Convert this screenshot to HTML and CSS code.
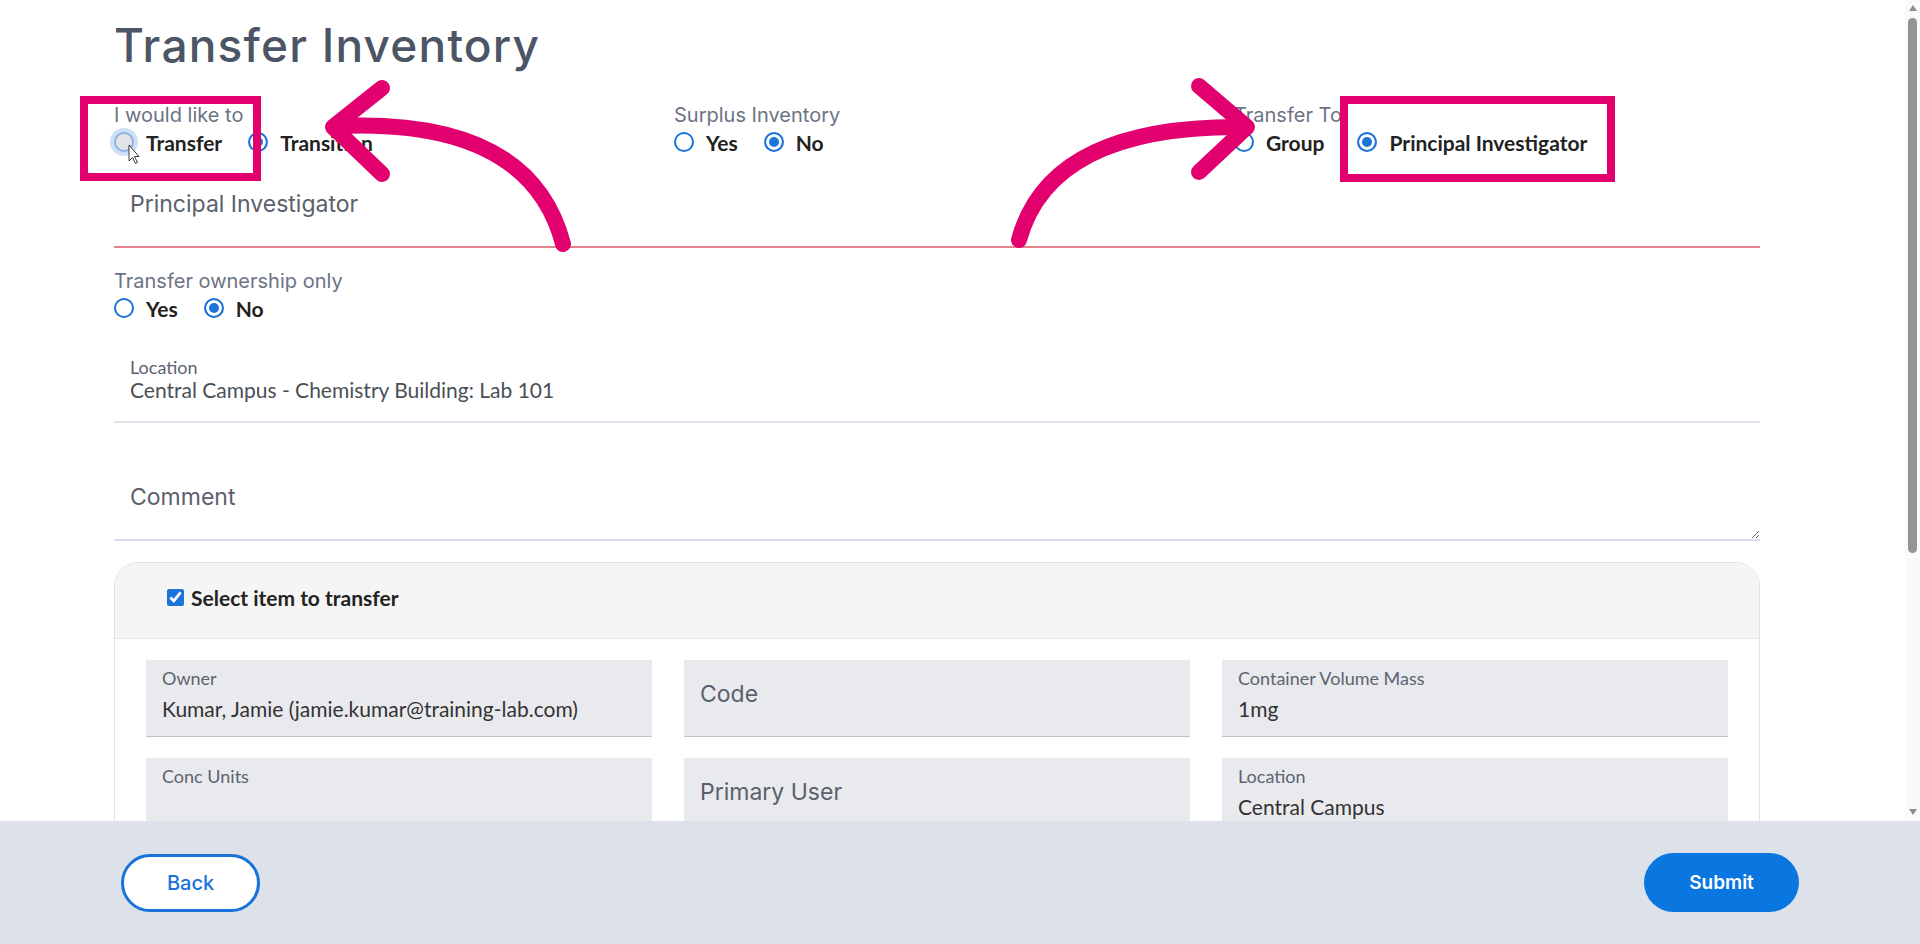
FILE: index.html
```html
<!doctype html>
<html lang="en-US">
  <head>
    <meta charset="utf-8" />
    <title>Transfer Inventory</title>
    <meta name="viewport" content="width=device-width, initial-scale=1" />
    <link rel="stylesheet" href="styles.css">
  </head>
  <body>
    <div class="viewport">
      <div class="page">
        <div class="content">
          <h1 class="title">Transfer Inventory</h1>

          <div class="choices">
            <div class="choice">
              <div class="choice-label">I would like to</div>
              <div class="options">
                <label class="option"><input type="radio" name="action" class="hovered" /> Transfer</label>
                <label class="option"><input type="radio" name="action" checked /> Transition</label>
              </div>
            </div>
            <div class="choice">
              <div class="choice-label">Surplus Inventory</div>
              <div class="options">
                <label class="option"><input type="radio" name="surplus" /> Yes</label>
                <label class="option"><input type="radio" name="surplus" checked /> No</label>
              </div>
            </div>
            <div class="choice">
              <div class="choice-label">Transfer To</div>
              <div class="options wide">
                <label class="option"><input type="radio" name="target" /> Group</label>
                <label class="option"><input type="radio" name="target" checked /> Principal Investigator</label>
              </div>
            </div>
          </div>

          <div class="line-input invalid">
            <input type="text" placeholder="Principal Investigator" />
          </div>

          <div class="choice single">
            <div class="choice-label">Transfer ownership only</div>
            <div class="options">
              <label class="option"><input type="radio" name="ownership" /> Yes</label>
              <label class="option"><input type="radio" name="ownership" checked /> No</label>
            </div>
          </div>

          <div class="field plain">
            <span class="field-label">Location</span>
            <span class="field-value">Central Campus - Chemistry Building: Lab 101</span>
          </div>

          <textarea class="comment" placeholder="Comment"></textarea>

          <section class="card">
            <header class="card-head">
              <label class="select-all"><input type="checkbox" checked /> Select item to transfer</label>
            </header>
            <div class="card-body">
              <div class="field">
                <span class="field-label">Owner</span>
                <span class="field-value">Kumar, Jamie (jamie.kumar@training-lab.com)</span>
              </div>
              <div class="field empty"><span class="placeholder">Code</span></div>
              <div class="field">
                <span class="field-label">Container Volume Mass</span>
                <span class="field-value">1mg</span>
              </div>

              <div class="field">
                <span class="field-label">Conc Units</span>
                <span class="field-value"></span>
              </div>
              <div class="field empty"><span class="placeholder">Primary User</span></div>
              <div class="field">
                <span class="field-label">Location</span>
                <span class="field-value">Central Campus</span>
              </div>
            </div>
          </section>

          <!-- callouts drawn on top of the form -->
          <svg class="marks" width="1905" height="300" viewBox="0 0 1905 300">
            <g fill="none" stroke="#e2006f" stroke-width="8">
              <rect x="84" y="100" width="173" height="77" />
              <rect x="1344" y="100" width="267" height="78" />
            </g>
            <g fill="none" stroke="#e2006f" stroke-width="16" stroke-linecap="round" stroke-linejoin="round">
              <path d="M563 244 Q530 117 336 126" />
              <path d="M382 88 L333 127 L382 174" />
              <path d="M1019 240 Q1050 125 1244 127" />
              <path d="M1199 86 L1247 127 L1199 172" />
            </g>
            <path class="pointer" d="M129 145 L129 161 L132.5 157.5 L135.5 163.5 L137.5 162.5 L134.5 156.5 L139 156.5 Z" />
          </svg>
        </div>
      </div>

      <div class="scrollbar">
        <span class="scroll-arrow up"></span>
        <span class="scroll-thumb"></span>
        <span class="scroll-arrow down"></span>
      </div>
    </div>

    <footer class="actions">
      <button type="button" class="btn back">Back</button>
      <button type="button" class="btn submit">Submit</button>
    </footer>
  </body>
</html>
```

FILE: styles.css
```css
* {
  box-sizing: border-box;
  margin: 0;
  padding: 0;
}

body {
  height: 100vh;
  display: flex;
  flex-direction: column;
  overflow: hidden;
  background: #fff;
  font-family: Inter, "Liberation Sans", sans-serif;
  color: #222;
}

.viewport {
  flex: 1;
  min-height: 0;
  display: flex;
}

.page {
  flex: 1;
  overflow: hidden;
}

.content {
  position: relative;
  padding: 19px 145px 40px 114px;
}

.title {
  font-size: 46px;
  line-height: 52px;
  font-weight: 500;
  letter-spacing: 1.2px;
  color: #4b5566;
}

/* radio groups */

.choices {
  display: grid;
  grid-template-columns: repeat(3, 1fr);
  column-gap: 34px;
  margin-top: 33px;
}

.choice-label {
  font-size: 20px;
  line-height: 22px;
  color: #6b7385;
}

.options {
  display: flex;
  gap: 26px;
  height: 24px;
  margin-top: 4px;
}

.options.wide {
  gap: 33px;
}

.option {
  display: inline-flex;
  align-items: center;
  gap: 12px;
  font-family: Lato, "Liberation Sans", sans-serif;
  font-weight: 700;
  font-size: 21px;
  color: #222;
}

.option input {
  appearance: none;
  flex: none;
  width: 20px;
  height: 20px;
  border: 2px solid #1b74d8;
  border-radius: 50%;
  background: #fff;
}

.option input:checked {
  background: #1b74d8;
  box-shadow: inset 0 0 0 3px #fff;
}

.option input.hovered {
  border-color: #8fb2e4;
  background: #e2e4e9;
  box-shadow: 0 0 0 4px rgba(27, 116, 216, 0.22);
}

.choice.single {
  margin-top: 22px;
}

/* inputs */

.line-input {
  margin-top: 16px;
  height: 78px;
  border-bottom: 2px solid #dfe2ea;
}

.line-input.invalid {
  border-bottom-color: #e5838d;
}

.line-input input,
.comment {
  width: 100%;
  border: 0;
  outline: none;
  background: transparent;
  font-family: Inter, "Liberation Sans", sans-serif;
  font-size: 23px;
  line-height: 28px;
  color: #333;
}

.line-input input {
  padding: 20px 16px 0;
}

.line-input input::placeholder,
.comment::placeholder,
.placeholder {
  color: #5a606c;
  opacity: 1;
}

.comment {
  display: block;
  margin-top: 18px;
  height: 100px;
  padding: 42px 16px 0;
  border-bottom: 2px solid #d9dbe8;
  resize: vertical;
}

/* read-only fields */

.field {
  display: flex;
  flex-direction: column;
  height: 77px;
  padding: 8px 16px 0;
  background: #e9eaee;
  border-bottom: 1px solid #bcc2ce;
  font-family: Lato, "Liberation Sans", sans-serif;
}

.field.plain {
  margin-top: 26px;
  height: 77px;
  padding-top: 11px;
  background: none;
  border-bottom: 2px solid #dfe2ea;
}

.field-label {
  font-size: 18px;
  line-height: 20px;
  color: #5d6370;
}

.field-value {
  margin-top: 8px;
  font-size: 21px;
  line-height: 26px;
  min-height: 26px;
  color: #333;
}

.field.plain .field-value {
  margin-top: 0;
  color: #4a4f58;
}

.field.empty {
  padding-top: 20px;
}

.placeholder {
  font-family: Inter, "Liberation Sans", sans-serif;
  font-size: 23px;
  line-height: 28px;
}

/* item card */

.card {
  margin-top: 21px;
  border: 1px solid #e2e3e6;
  border-radius: 24px;
  overflow: hidden;
}

.card-head {
  display: flex;
  align-items: center;
  height: 76px;
  padding: 0 52px 6px;
  background: #f5f5f5;
  border-bottom: 1px solid #e3e4e7;
}

.select-all {
  display: inline-flex;
  align-items: center;
  gap: 7px;
  font-family: Lato, "Liberation Sans", sans-serif;
  font-weight: 700;
  font-size: 21px;
  color: #222;
}

.select-all input {
  width: 17px;
  height: 17px;
  margin: 0;
  accent-color: #1b74d8;
}

.card-body {
  display: grid;
  grid-template-columns: repeat(3, 1fr);
  gap: 21px 32px;
  padding: 21px 31px 31px;
}

/* annotation layer */

.marks {
  position: absolute;
  top: 0;
  left: 0;
  pointer-events: none;
}

.pointer {
  fill: #fff;
  stroke: #3a3a3a;
  stroke-width: 1;
  stroke-linejoin: round;
}

/* scrollbar of the form area */

.scrollbar {
  flex: none;
  width: 15px;
  display: flex;
  flex-direction: column;
  align-items: center;
  padding: 5px 0 6px;
  background: #fafafa;
}

.scroll-arrow {
  width: 0;
  height: 0;
  border-left: 4px solid transparent;
  border-right: 4px solid transparent;
}

.scroll-arrow.up {
  border-bottom: 6px solid #8e8e8e;
}

.scroll-arrow.down {
  margin-top: auto;
  border-top: 6px solid #8e8e8e;
}

.scroll-thumb {
  width: 9px;
  height: 535px;
  margin-top: 7px;
  border-radius: 5px;
  background: #949494;
}

/* bottom bar */

.actions {
  flex: none;
  height: 123px;
  display: flex;
  align-items: center;
  justify-content: space-between;
  padding: 0 121px;
  background: #dde1e9;
}

.btn {
  height: 58px;
  border-radius: 30px;
  font-family: Inter, "Liberation Sans", sans-serif;
  font-size: 19px;
  cursor: pointer;
}

.btn.back {
  width: 139px;
  border: 3px solid #1a73d9;
  background: #fff;
  color: #1a73d9;
  font-size: 20px;
  font-weight: 500;
}

.btn.submit {
  width: 155px;
  height: 59px;
  border: 0;
  background: #0a76df;
  color: #fff;
  font-weight: 600;
}
```
